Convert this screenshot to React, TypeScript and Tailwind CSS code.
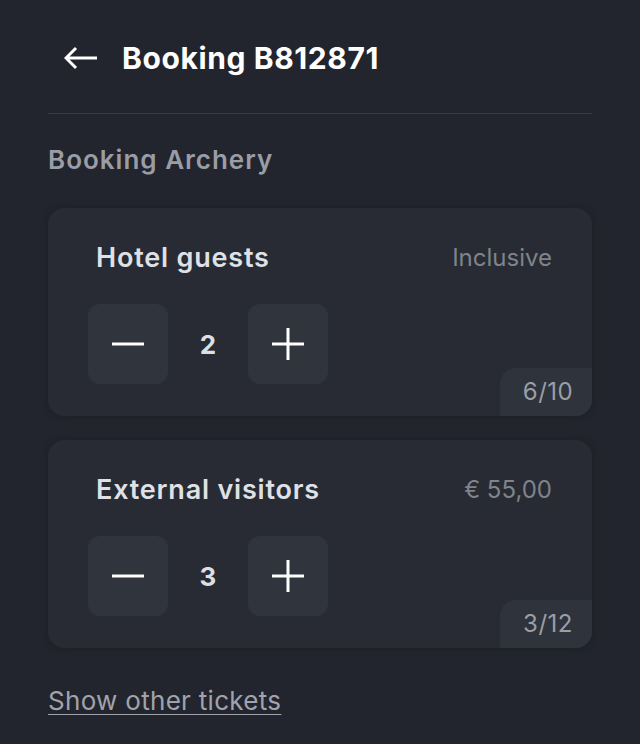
import { useState } from "react";

type Ticket = {
  name: string;
  price: string;
  count: number;
  used: string;
};

const tickets: Ticket[] = [
  { name: "Hotel guests", price: "Inclusive", count: 2, used: "6/10" },
  { name: "External visitors", price: "€ 55,00", count: 3, used: "3/12" },
];

function Minus() {
  return (
    <svg width="34" height="34" viewBox="0 0 34 34" fill="none">
      <path d="M1 17H33" stroke="white" strokeWidth="3" />
    </svg>
  );
}

function Plus() {
  return (
    <svg width="34" height="34" viewBox="0 0 34 34" fill="none">
      <path d="M1 17H33M17 1V33" stroke="white" strokeWidth="3" />
    </svg>
  );
}

function TicketCard({ ticket }: { ticket: Ticket }) {
  const [count, setCount] = useState(ticket.count);
  return (
    <div className="relative rounded-2xl bg-[#282b33] px-10 pt-8 pb-8 shadow-[0_0_6px_rgba(0,0,0,0.25)]">
      <div className="flex items-center justify-between pl-2">
        <span className="text-[27px] leading-9 font-semibold tracking-[0.8px] text-[#dfe1e6]">{ticket.name}</span>
        <span className="text-[24px] leading-9 text-[#7f838b]">{ticket.price}</span>
      </div>
      <div className="mt-7 flex items-center">
        <button
          onClick={() => setCount(Math.max(0, count - 1))}
          className="flex h-20 w-20 items-center justify-center rounded-xl bg-[#30343c]"
        >
          <Minus />
        </button>
        <span className="w-20 text-center text-[26px] font-bold text-[#dcdfe4]">{count}</span>
        <button
          onClick={() => setCount(count + 1)}
          className="flex h-20 w-20 items-center justify-center rounded-xl bg-[#30343c]"
        >
          <Plus />
        </button>
      </div>
      <div className="absolute right-0 bottom-0 flex h-12 w-[92px] items-center justify-center rounded-tl-2xl rounded-br-2xl bg-[#2f333b] pl-1 text-[24px] tracking-[0.5px] text-[#9a9ea6]">
        {ticket.used}
      </div>
    </div>
  );
}

export default function App() {
  return (
    <div
      className="min-h-[744px] bg-[#22252d] px-12"
      style={{ fontFamily: "Inter, 'Noto Sans', sans-serif" }}
    >
      <header className="flex items-center gap-6 border-b border-[#393c44] pt-[38px] pb-[35px] pl-4">
        <svg width="34" height="24" viewBox="0 0 34 24" fill="none">
          <path d="M33 12H2M12 2L2 12L12 22" stroke="white" strokeWidth="3" />
        </svg>
        <h1 className="text-[30px] leading-10 font-bold tracking-[0.6px] text-white">Booking B812871</h1>
      </header>

      <h2 className="mt-[30px] text-[26px] leading-8 font-semibold tracking-[1px] text-[#9a9da5]">Booking Archery</h2>

      <div className="mt-8 flex flex-col gap-6">
        {tickets.map((t) => (
          <TicketCard key={t.name} ticket={t} />
        ))}
      </div>

      <a href="#" className="mt-[37px] inline-block text-[26px] leading-8 tracking-[0.3px] text-[#a0a3ab] underline underline-offset-4 decoration-1">
        Show other tickets
      </a>
    </div>
  );
}
